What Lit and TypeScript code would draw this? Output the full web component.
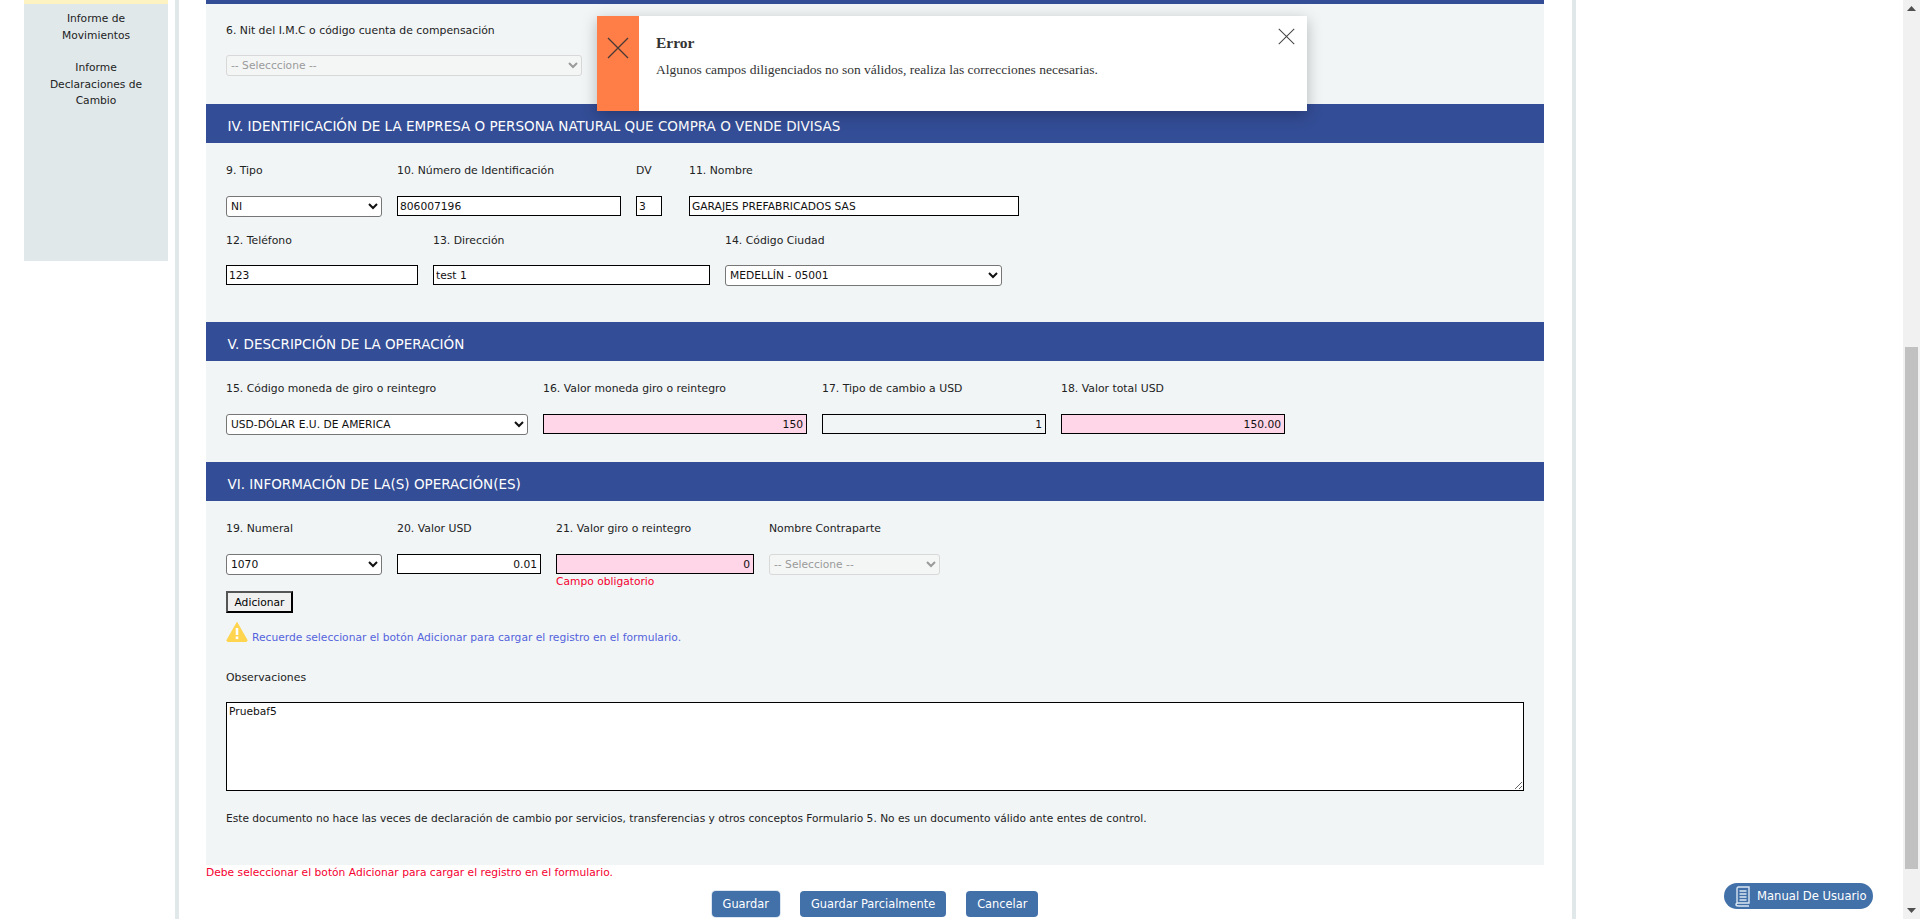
import { LitElement, css, html, nothing } from 'lit';
import { customElement } from 'lit/decorators.js';

type Field = {
  label: string;
  width: number;
  kind: 'select' | 'input';
  value: string;
  tone?: 'error' | 'readonly';
  right?: boolean;
  disabled?: boolean;
  message?: string;
  extra?: number;
};

const rowIdent: Field[] = [
  { label: '9. Tipo', width: 156, kind: 'select', value: 'NI' },
  { label: '10. Número de Identificación', width: 224, kind: 'input', value: '806007196' },
  { label: 'DV', width: 26, kind: 'input', value: '3', extra: 12 },
  { label: '11. Nombre', width: 330, kind: 'input', value: 'GARAJES PREFABRICADOS SAS' },
];

const rowContact: Field[] = [
  { label: '12. Teléfono', width: 192, kind: 'input', value: '123' },
  { label: '13. Dirección', width: 277, kind: 'input', value: 'test 1' },
  { label: '14. Código Ciudad', width: 277, kind: 'select', value: 'MEDELLÍN - 05001' },
];

const rowDescription: Field[] = [
  { label: '15. Código moneda de giro o reintegro', width: 302, kind: 'select', value: 'USD-DÓLAR E.U. DE AMERICA' },
  { label: '16. Valor moneda giro o reintegro', width: 264, kind: 'input', value: '150', tone: 'error', right: true },
  { label: '17. Tipo de cambio a USD', width: 224, kind: 'input', value: '1', tone: 'readonly', right: true },
  { label: '18. Valor total USD', width: 224, kind: 'input', value: '150.00', tone: 'error', right: true },
];

const rowOperation: Field[] = [
  { label: '19. Numeral', width: 156, kind: 'select', value: '1070' },
  { label: '20. Valor USD', width: 144, kind: 'input', value: '0.01', right: true },
  { label: '21. Valor giro o reintegro', width: 198, kind: 'input', value: '0', tone: 'error', right: true, message: 'Campo obligatorio' },
  { label: 'Nombre Contraparte', width: 171, kind: 'select', value: '-- Seleccione --', disabled: true },
];

@customElement('app-root')
export class AppRoot extends LitElement {
  static styles = css`
    :host {
      display: flex;
      height: 919px;
      overflow: hidden;
      background: #fff;
      color: #222;
      font-family: 'DejaVu Sans', sans-serif;
      font-size: 10.7px;
      position: relative;
    }

    .page {
      flex: 1;
      display: flex;
      min-width: 0;
    }

    .sidebar {
      width: 144px;
      height: 261px;
      margin-left: 24px;
      background: #e0e8ea;
      border-top: 4px solid #fdf3c2;
      box-sizing: border-box;
      padding: 7px 20px 0;
      text-align: center;
      line-height: 16.5px;
    }

    .sidebar p {
      margin: 0 0 16px;
    }

    .rule {
      width: 4px;
      background: #e0e8ea;
    }

    .rule.left {
      margin-left: 7px;
    }

    .rule.right {
      margin-left: 28px;
    }

    main {
      width: 1338px;
      margin-left: 27px;
    }

    .panel {
      background: #f1f5f6;
      height: 865px;
      border-top: 4px solid #334d96;
      box-sizing: border-box;
    }

    .panel-top {
      padding: 19px 20px 28px;
    }

    h2 {
      margin: 0;
      height: 39px;
      box-sizing: border-box;
      line-height: 34px;
      padding: 5px 0 0 21.5px;
      background: #334d96;
      color: #fff;
      font-size: 13.5px;
      font-weight: 400;
    }

    .body {
      padding: 20px 20px 0;
    }

    .body.ident {
      height: 179px;
      box-sizing: border-box;
    }

    .body.desc {
      height: 101px;
      box-sizing: border-box;
    }

    .row {
      display: flex;
      gap: 15px;
      align-items: flex-start;
    }

    .row + .row {
      margin-top: 16px;
    }

    label {
      display: block;
      height: 14px;
      line-height: 16px;
      margin-bottom: 19px;
      font-size: 10.85px;
      white-space: nowrap;
    }

    .tight label {
      margin-bottom: 18px;
    }

    select,
    input,
    textarea {
      display: block;
      box-sizing: border-box;
      width: 100%;
      margin: 0;
      font: inherit;
      color: #111;
    }

    select {
      height: 21px;
      background: #fff;
      padding-bottom: 1px;
      border: 1px solid #767676;
      border-radius: 3px;
    }

    select:disabled {
      color: #9a9a9a;
      background: #f4f6f6;
      border-color: #d8d8d8;
      opacity: 1;
    }

    input {
      height: 20px;
      padding: 0 2px;
      border: 1px solid #000;
      background: #fff;
      border-radius: 0;
    }

    input.right {
      text-align: right;
      padding-right: 3px;
    }

    input.error {
      background: #ffd5e8;
    }

    input.readonly {
      background: #f1f5f6;
    }

    .message {
      height: 14px;
      line-height: 16px;
      color: #f5002f;
    }

    .add {
      display: block;
      width: 67px;
      height: 22px;
      margin-top: 3px;
      padding: 0;
      font: inherit;
      color: #000;
      background: #f0f0f0;
      border: 2px solid;
      border-color: #555 #000 #000 #555;
    }

    .notice {
      display: flex;
      align-items: flex-start;
      gap: 4px;
      margin-top: 8px;
      color: #5463dc;
      line-height: 14px;
    }

    .notice span {
      padding-top: 10px;
    }

    .notes-label {
      margin-top: 25px;
      margin-bottom: 18px;
    }

    textarea {
      width: 1298px;
      height: 89px;
      padding: 2px;
      border: 1px solid #000;
      background: #fff;
      border-radius: 0;
    }

    .legal {
      margin: 21px 0 0;
      line-height: 14px;
      font-size: 10.65px;
    }

    .required {
      margin: 1px 0 0;
      line-height: 14px;
      color: #f5002f;
    }

    .actions {
      display: flex;
      justify-content: center;
      gap: 20px;
      margin-top: 11px;
    }

    .btn {
      height: 26px;
      padding: 0 11px;
      border: 0;
      border-radius: 4px;
      background: #4270a8;
      color: #fff;
      font: inherit;
      font-size: 11.4px;
      font-weight: 500;
    }

    .btn.focused {
      box-shadow: 0 0 0 1px #dbe6f2;
    }

    .scrollbar {
      width: 17px;
      background: #f1f1f1;
      display: flex;
      flex-direction: column;
      align-items: center;
    }

    .arrow {
      height: 17px;
      display: flex;
      align-items: center;
      justify-content: center;
    }

    .thumb {
      width: 13px;
      height: 522px;
      margin-top: 330px;
      margin-bottom: auto;
      background: #c1c1c1;
    }

    .toast {
      position: absolute;
      left: 597px;
      top: 16px;
      width: 710px;
      height: 95px;
      display: flex;
      background: #fff;
      box-shadow: 0 4px 14px rgba(0, 0, 0, 0.25);
      font-family: 'Liberation Serif', serif;
      color: #333;
    }

    .toast-icon {
      width: 42px;
      background: #ff7d47;
      display: flex;
      justify-content: center;
      padding-top: 21px;
      box-sizing: border-box;
    }

    .toast-text {
      padding: 18px 0 0 17px;
    }

    .toast-text strong {
      display: block;
      font-size: 15.5px;
      line-height: 18px;
    }

    .toast-text span {
      display: block;
      margin-top: 9px;
      font-size: 13.5px;
      line-height: 17px;
    }

    .toast-close {
      position: absolute;
      right: 12px;
      top: 12px;
      line-height: 0;
    }

    .manual {
      position: absolute;
      left: 1724px;
      top: 883px;
      width: 149px;
      height: 26px;
      box-sizing: border-box;
      display: flex;
      align-items: center;
      gap: 7px;
      padding-left: 11px;
      border-radius: 13px;
      background: #4270a8;
      color: #fff;
      font-size: 11.6px;
      font-weight: 500;
    }
  `;

  private renderField(f: Field) {
    const extra = f.extra ? `margin-right:${f.extra}px;` : '';
    const classes = [f.tone ?? '', f.right ? 'right' : ''].join(' ');
    return html`
      <div style="width:${f.width}px;${extra}">
        <label>${f.label}</label>
        ${f.kind === 'select'
          ? html`<select ?disabled=${f.disabled}><option>${f.value}</option></select>`
          : html`<input class=${classes} .value=${f.value} />`}
        ${f.message ? html`<div class="message">${f.message}</div>` : nothing}
      </div>
    `;
  }

  private renderRow(fields: Field[], tight = false) {
    return html`<div class="row ${tight ? 'tight' : ''}">${fields.map((f) => this.renderField(f))}</div>`;
  }

  private cross(size: number, color: string) {
    return html`<svg width=${size} height=${size} viewBox="0 0 22 22" fill="none" stroke=${color} stroke-width="1.3">
      <path d="M1 1 21 21M21 1 1 21" />
    </svg>`;
  }

  render() {
    return html`
      <div class="page">
        <aside class="sidebar">
          <p>Informe de Movimientos</p>
          <p>Informe Declaraciones de Cambio</p>
        </aside>
        <div class="rule left"></div>
        <main>
          <div class="panel">
            <div class="panel-top">
              <div class="row tight">
                <div style="width:356px">
                  <label>6. Nit del I.M.C o código cuenta de compensación</label>
                  <select disabled><option>-- Selecccione --</option></select>
                </div>
              </div>
            </div>

            <h2>IV. IDENTIFICACIÓN DE LA EMPRESA O PERSONA NATURAL QUE COMPRA O VENDE DIVISAS</h2>
            <div class="body ident">
              ${this.renderRow(rowIdent)} ${this.renderRow(rowContact, true)}
            </div>

            <h2>V. DESCRIPCIÓN DE LA OPERACIÓN</h2>
            <div class="body desc">${this.renderRow(rowDescription)}</div>

            <h2>VI. INFORMACIÓN DE LA(S) OPERACIÓN(ES)</h2>
            <div class="body">
              ${this.renderRow(rowOperation)}
              <button class="add">Adicionar</button>
              <div class="notice">
                <svg width="22" height="21" viewBox="0 0 22 21">
                  <path d="M11 1.5 21 19a1 1 0 0 1-.9 1.5H1.9A1 1 0 0 1 1 19Z" fill="#ffd54f" stroke="#ffd54f" stroke-linejoin="round" />
                  <rect x="9.7" y="7" width="2.6" height="7" fill="#fff" />
                  <rect x="9.7" y="15.5" width="2.6" height="2.6" fill="#fff" />
                </svg>
                <span>Recuerde seleccionar el botón Adicionar para cargar el registro en el formulario.</span>
              </div>
              <label class="notes-label">Observaciones</label>
              <textarea .value=${'Pruebaf5'}></textarea>
              <p class="legal">
                Este documento no hace las veces de declaración de cambio por servicios, transferencias y otros conceptos Formulario 5. No es un documento válido ante entes de control.
              </p>
            </div>
          </div>
          <p class="required">Debe seleccionar el botón Adicionar para cargar el registro en el formulario.</p>
          <div class="actions">
            <button class="btn focused">Guardar</button>
            <button class="btn">Guardar Parcialmente</button>
            <button class="btn">Cancelar</button>
          </div>
        </main>
        <div class="rule right"></div>
      </div>

      <div class="scrollbar">
        <div class="arrow">
          <svg width="9" height="5" viewBox="0 0 9 5"><path d="M4.5 0 9 5H0Z" fill="#505050" /></svg>
        </div>
        <div class="thumb"></div>
        <div class="arrow">
          <svg width="9" height="5" viewBox="0 0 9 5"><path d="M0 0H9L4.5 5Z" fill="#505050" /></svg>
        </div>
      </div>

      <div class="toast">
        <div class="toast-icon">${this.cross(22, '#4a3a36')}</div>
        <div class="toast-text">
          <strong>Error</strong>
          <span>Algunos campos diligenciados no son válidos, realiza las correcciones necesarias.</span>
        </div>
        <div class="toast-close">${this.cross(17, '#444')}</div>
      </div>

      <div class="manual">
        <svg width="15" height="21" viewBox="0 0 15 21" fill="none" stroke="#dbe6f3">
          <path d="M2 17V2.5Q2 1 3.5 1H14V17H3.5Q1 17 1 18.5T3.5 20H14" stroke-width="1.4" />
          <path d="M4.5 5H11.5M4.5 8H11.5M4.5 11H11.5M4.5 14H11.5" stroke-width="1.6" />
        </svg>
        <span>Manual De Usuario</span>
      </div>
    `;
  }
}
